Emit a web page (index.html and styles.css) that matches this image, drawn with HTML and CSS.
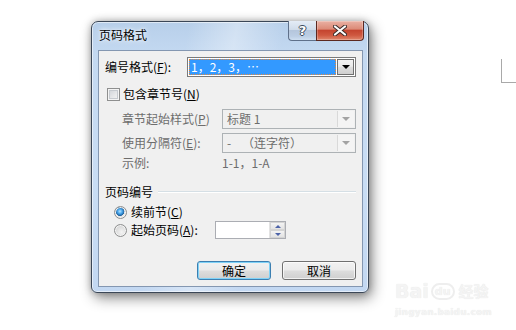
FILE: index.html
```html
<!DOCTYPE html>
<html lang="zh-CN">
<head>
<meta charset="utf-8">
<title>页码格式</title>
<link rel="stylesheet" href="styles.css">
</head>
<body>
<div class="page-mark"></div>
<div class="window">
  <div class="titlebar">
    <div class="title">页码格式</div>
    <div class="caption">
      <div class="cap-btn help">?</div>
      <div class="cap-btn close">
        <svg width="14" height="11" viewBox="0 0 14 11"><path d="M2 1.5 L12 9.5 M12 1.5 L2 9.5" stroke="#3a2a28" stroke-width="4" stroke-linecap="round"/><path d="M2 1.5 L12 9.5 M12 1.5 L2 9.5" stroke="#fff" stroke-width="2.2" stroke-linecap="round"/></svg>
      </div>
    </div>
  </div>
  <div class="client">
    <div class="row row-format">
      <span class="label w82">编号格式(<u>F</u>):</span>
      <div class="combo focus">
        <div class="combo-text selected"><span>1，2，3，…</span></div>
        <div class="combo-btn"><i class="tri"></i></div>
      </div>
    </div>
    <div class="row row-check">
      <span class="checkbox"></span>
      <span class="label">包含章节号(<u>N</u>)</span>
    </div>
    <div class="row row-sub r1">
      <span class="label dis w100">章节起始样式(<u>P</u>)</span>
      <div class="combo disabled">
        <div class="combo-text">标题 1</div>
        <div class="combo-btn"><i class="tri"></i></div>
      </div>
    </div>
    <div class="row row-sub r2">
      <span class="label dis w100">使用分隔符(<u>E</u>):</span>
      <div class="combo disabled">
        <div class="combo-text">-&nbsp;&nbsp;&nbsp;&nbsp;（连字符）</div>
        <div class="combo-btn"><i class="tri"></i></div>
      </div>
    </div>
    <div class="row row-sub r3">
      <span class="label dis w100">示例:</span>
      <span class="label dis">1-1，1-A</span>
    </div>
    <div class="group">
      <span class="label">页码编号</span>
      <span class="group-line"></span>
    </div>
    <div class="row row-radio first">
      <span class="radio checked"></span>
      <span class="label">续前节(<u>C</u>)</span>
    </div>
    <div class="row row-radio second">
      <span class="radio"></span>
      <span class="label w84">起始页码(<u>A</u>):</span>
      <div class="spin">
        <div class="spin-field"></div>
        <div class="spin-btns">
          <span class="spin-b up"><i></i></span>
          <span class="spin-b down"><i></i></span>
        </div>
      </div>
    </div>
    <div class="buttons">
      <div class="btn default">确定</div>
      <div class="btn">取消</div>
    </div>
  </div>
</div>
<div class="watermark">
  <div class="wm-logo"><span>Bai</span><span class="wm-du">du</span><span class="wm-cn">经验</span></div>
  <div class="wm-url">jingyan.baidu.com</div>
</div>
</body>
</html>
```
FILE: styles.css
```css
* { box-sizing: border-box; }
html, body { margin: 0; padding: 0; }
body {
  width: 516px;
  height: 330px;
  overflow: hidden;
  background: #ffffff;
  position: relative;
  font-family: "Noto Sans CJK SC", "Noto Sans", "DejaVu Sans", sans-serif;
  font-size: 12px;
  color: #000;
}
u { text-decoration: underline; }

.page-mark {
  position: absolute;
  left: 501px;
  top: 59px;
  width: 20px;
  height: 24px;
  border-left: 1px solid #a9a9a9;
  border-bottom: 1px solid #a9a9a9;
}

.window {
  margin: 21px 0 0 91px;
  width: 278px;
  height: 272px;
  border: 1px solid #3b4757;
  border-radius: 7px 7px 6px 6px;
  background:
    linear-gradient(100deg, rgba(255,255,255,0) 30%, rgba(255,255,255,.35) 45%, rgba(255,255,255,0) 60%),
    linear-gradient(to bottom, #b7cfea 0%, #c4d9f1 12%, #c9ddf4 60%, #c3d8f2 100%);
  box-shadow: 3px 5px 14px rgba(0,0,0,.45), 0 0 7px rgba(0,0,0,.25), inset 0 0 0 1px rgba(255,255,255,.55);
  padding: 0 5px 5px 6px;
  display: flex;
  flex-direction: column;
}

.titlebar {
  height: 28px;
  display: flex;
  align-items: flex-start;
  justify-content: space-between;
}
.title {
  margin-left: 1px;
  padding-top: 5px;
  line-height: 16px;
  font-size: 12px;
  color: #000;
  text-shadow: 0 0 6px rgba(255,255,255,.9), 0 0 3px rgba(255,255,255,.9);
}
.caption {
  display: flex;
  margin-top: -1px;
  margin-right: -1px;
}
.cap-btn {
  height: 20px;
  display: flex;
  align-items: center;
  justify-content: center;
}
.help {
  width: 28px;
  border: 1px solid #5f708a;
  border-right: none;
  border-top: none;
  border-radius: 0 0 0 4px;
  background: linear-gradient(to bottom, #e4ecf6 0%, #d0dcea 45%, #b5c6dc 50%, #bccee4 80%, #cfdff1 100%);
  font-family: "DejaVu Sans", sans-serif;
  font-weight: bold;
  font-size: 13px;
  color: #fff;
  text-shadow: 1px 0 0 #3c4a5c, -1px 0 0 #3c4a5c, 0 1px 0 #3c4a5c, 0 -1px 0 #3c4a5c;
  line-height: 18px;
}
.close {
  width: 48px;
  border: 1px solid #5c2820;
  border-top: none;
  border-radius: 0 0 4px 0;
  background: linear-gradient(to bottom, #eab1a4 0%, #dc8b78 42%, #c54530 50%, #cf5840 75%, #e0876d 100%);
  box-shadow: inset 0 0 0 1px rgba(255,255,255,.25);
}

.client {
  flex: 1;
  border: 1px solid #8497b1;
  background: #f0f0f0;
  padding: 6px 6px 0 6px;
  display: flex;
  flex-direction: column;
}

.row { display: flex; align-items: center; }
.label { line-height: 14px; white-space: nowrap; }
.label u { text-underline-offset: 1px; }
.dis { color: #6d6d6d; }
.w82 { width: 82px; }
.w100 { width: 100px; }
.w84 { width: 84px; }

.row-format { height: 20px; }
.combo {
  display: flex;
  height: 20px;
  border: 1px solid #7a7a7a;
  background: #fff;
  padding: 1px;
}
.focus { width: 169px; }
.combo-text {
  flex: 1;
  display: flex;
  align-items: center;
  padding-left: 2px;
  line-height: 14px;
  white-space: nowrap;
}
.combo-text.selected {
  background: #3399ff;
  color: #fff;
  outline: 1px dotted #e88a3a;
  outline-offset: -1px;
}
.combo-btn {
  width: 17px;
  margin-left: 1px;
  border: 1px solid #707070;
  background: linear-gradient(to bottom, #f2f2f2 0%, #ebebeb 45%, #dddddd 50%, #cfcfcf 100%);
  display: flex;
  align-items: center;
  justify-content: center;
}
.tri {
  width: 0; height: 0;
  border-left: 4px solid transparent;
  border-right: 4px solid transparent;
  border-top: 4px solid #000;
}

.row-check { margin-top: 9px; height: 16px; }
.checkbox {
  width: 13px; height: 13px;
  margin-left: 2px;
  margin-right: 3px;
  border: 1px solid #8e8f8f;
  background: linear-gradient(135deg, #cbcfd5 0%, #e8e9ea 60%, #f6f6f6 100%);
  box-shadow: inset 0 0 0 1px #f4f4f4, inset 0 0 0 2px #c6cacf;
}

.row-sub { padding-left: 17px; }
.r1 { margin-top: 7px; height: 20px; }
.r2 { margin-top: 4px; height: 20px; }
.r3 { margin-top: 3px; height: 14px; }
.disabled {
  width: 134px;
  height: 20px;
  border-color: #adb2b5;
  background: #f0f0f0;
}
.disabled .combo-text { color: #6d6d6d; padding-left: 3px; }
.disabled .combo-btn {
  width: 17px;
  border: none;
  border-left: 1px solid #d9d9d9;
  background: #f4f4f4;
}
.disabled .tri { border-top-color: #a3a3a3; }

.group {
  margin-top: 15px;
  height: 14px;
  display: flex;
  align-items: center;
}
.group-line {
  flex: 1;
  margin-left: 5px;
  height: 2px;
  border-top: 1px solid #d5dfe5;
  border-bottom: 1px solid #ffffff;
}

.row-radio { padding-left: 9px; }
.row-radio.first { margin-top: 6px; height: 14px; }
.row-radio.second { margin-top: 2px; height: 18px; }
.radio {
  width: 13px; height: 13px;
  border-radius: 50%;
  border: 1px solid #8e8f8f;
  margin-right: 4px;
  background: radial-gradient(circle at 60% 65%, #f4f4f4 0%, #dcdcdc 55%, #c7c7c7 100%);
  box-shadow: inset 0 0 0 1px #f4f4f4;
}
.radio.checked {
  background:
    radial-gradient(circle at 45% 40%, #b8e4ff 0%, #4aa7ec 25%, #1c5f9c 48%, transparent 52%),
    radial-gradient(circle, #f0f0f0 0%, #d6d6d6 100%);
}

.spin {
  width: 71px;
  height: 18px;
  border: 1px solid #abadb3;
  background: #fff;
  display: flex;
}
.spin-field { flex: 1; }
.spin-btns {
  width: 16px;
  display: flex;
  flex-direction: column;
  border-left: 1px solid #e3e3e3;
}
.spin-b {
  flex: 1;
  display: flex;
  align-items: center;
  justify-content: center;
  background: linear-gradient(to bottom, #f3f3f3, #e3e3e3);
  border: 1px solid #d4d4d4;
}
.spin-b i {
  width: 0; height: 0;
  border-left: 3px solid transparent;
  border-right: 3px solid transparent;
}
.spin-b.up i { border-bottom: 3px solid #4d63a8; }
.spin-b.down i { border-top: 3px solid #4d63a8; }

.buttons {
  margin-top: 22px;
  display: flex;
  justify-content: flex-end;
  gap: 11px;
  padding-right: 0;
}
.btn {
  width: 74px;
  height: 19px;
  border: 1px solid #707070;
  border-radius: 3px;
  background: linear-gradient(to bottom, #f2f2f2 0%, #ebebeb 48%, #dddddd 52%, #cfcfcf 100%);
  box-shadow: inset 0 0 0 1px rgba(255,255,255,.7);
  display: flex;
  align-items: center;
  justify-content: center;
  line-height: 14px;
  font-size: 12px;
}
.btn.default {
  border-color: #3c7fb1;
  box-shadow: inset 0 0 0 1px #7fd2f7;
}

.watermark {
  position: absolute;
  left: 395px;
  top: 276px;
  color: #f4f4f4;
  font-family: "DejaVu Sans", sans-serif;
  text-shadow: 0 0 1px #e2e2e2;
}
.wm-logo {
  display: flex;
  align-items: center;
  font-size: 19px;
  font-weight: bold;
  line-height: 24px;
  height: 30px;
}
.wm-du {
  font-size: 11px;
  margin-left: 2px;
  border: 2px solid #eeeeee;
  border-radius: 9px;
  padding: 0 2px;
  line-height: 13px;
}
.wm-cn {
  font-family: "Noto Sans CJK SC", sans-serif;
  font-size: 15px;
  margin-left: 4px;
}
.wm-url {
  font-size: 9px;
  font-weight: bold;
  letter-spacing: .2px;
  line-height: 12px;
}
```
